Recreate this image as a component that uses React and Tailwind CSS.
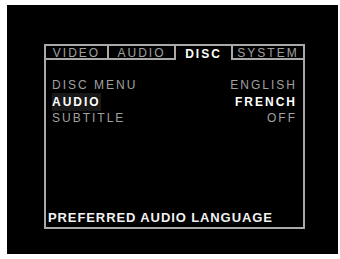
const tabs = [
  { label: 'VIDEO', w: 'w-[63px]' },
  { label: 'AUDIO', w: 'w-[67px]' },
  { label: 'DISC', w: 'w-[57px]', active: true },
  { label: 'SYSTEM', w: 'w-[74px]', last: true },
];

const rows = [
  { label: 'DISC MENU', value: 'ENGLISH' },
  { label: 'AUDIO', value: 'FRENCH', selected: true },
  { label: 'SUBTITLE', value: 'OFF' },
];

export default function App() {
  return (
    <div className="w-[340px] h-[259px] bg-white pl-[7px] pt-[5px] font-['Liberation_Sans',Arial,sans-serif]">
      <div className="w-[331px] h-[249px] bg-black pl-[37px] pt-[39px]">
        <div className="w-[261px]">
          {/* tab strip */}
          <div className="flex h-[16px]">
            {tabs.map((t) => (
              <div
                key={t.label}
                className={
                  'flex items-center justify-center pt-[1px] border-t-2 border-l-2 border-[#a9a9a9] text-[12px] leading-none tracking-[2px] ' +
                  t.w +
                  (t.active ? ' text-white font-bold' : ' border-b-2 text-[#a0a0a0]') +
                  (t.last ? ' border-r-2' : '')
                }
              >
                {t.label}
              </div>
            ))}
          </div>

          {/* panel */}
          <div className="h-[169px] border-l-2 border-r-2 border-b-2 border-[#a9a9a9] flex flex-col pt-[17px] pb-[1px]">
            <div className="flex flex-col pl-[6px] pr-[8px]">
              {rows.map((r) => (
                <div
                  key={r.label}
                  className={
                    'flex justify-between items-center h-[16.5px] text-[12px] tracking-[2px] ' +
                    (r.selected ? 'text-white font-bold' : 'text-[#a0a0a0]')
                  }
                >
                  <span className={r.selected ? 'bg-[#181818]' : ''}>{r.label}</span>
                  <span className="-mr-[2px]">{r.value}</span>
                </div>
              ))}
            </div>

            <div className="mt-auto pl-[2px] h-[16px] flex items-center text-[13px] tracking-[0.9px] text-[#f2f2f2] font-bold">
              PREFERRED AUDIO LANGUAGE
            </div>
          </div>
        </div>
      </div>
    </div>
  );
}
